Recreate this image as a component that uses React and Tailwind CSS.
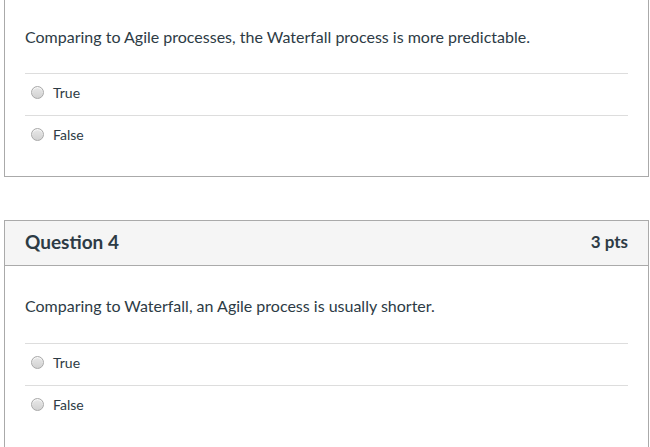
import React from 'react';

const font = { fontFamily: 'Lato, "Liberation Sans", sans-serif' };

const Radio = () => (
  <span className="inline-block w-[13px] h-[13px] rounded-full border border-[#a9a9a9] bg-gradient-to-b from-[#e8e8e8] to-[#d2d2d2] shadow-[inset_0_1px_1px_rgba(255,255,255,0.8)]" />
);

const Option = ({ label }) => (
  <div className="flex items-center h-[42px] border-t border-[#dddddd] pl-[6px] pb-[5px]">
    <Radio />
    <span className="ml-[9px] text-[14px] text-[#2d3b45]">{label}</span>
  </div>
);

export default function App() {
  return (
    <div className="w-[650px] h-[447px] overflow-hidden bg-white" style={font}>
      <div className="ml-[4px] w-[645px] -mt-[4px] border border-[#aaaaaa]">
        <div className="px-[20px] pt-[28px] pb-[19px]">
          <p className="text-[16px] leading-[24px] text-[#2d3b45] mb-[24px]">
            Comparing to Agile processes, the Waterfall process is more predictable.
          </p>
          <Option label="True" />
          <Option label="False" />
        </div>
      </div>

      <div className="ml-[4px] w-[645px] mt-[43px] border border-[#aaaaaa]">
        <div className="flex items-center justify-between h-[45px] px-[20px] pb-[2px] bg-[#f5f5f5] border-b border-[#aaaaaa]">
          <span className="text-[19px] font-bold text-[#2d3b45]">Question 4</span>
          <span className="text-[17px] font-bold text-[#2d3b45]">3 pts</span>
        </div>
        <div className="px-[20px] pt-[28px] pb-[40px]">
          <p className="text-[16px] leading-[24px] text-[#2d3b45] mb-[25px]">
            Comparing to Waterfall, an Agile process is usually shorter.
          </p>
          <Option label="True" />
          <Option label="False" />
        </div>
      </div>
    </div>
  );
}
